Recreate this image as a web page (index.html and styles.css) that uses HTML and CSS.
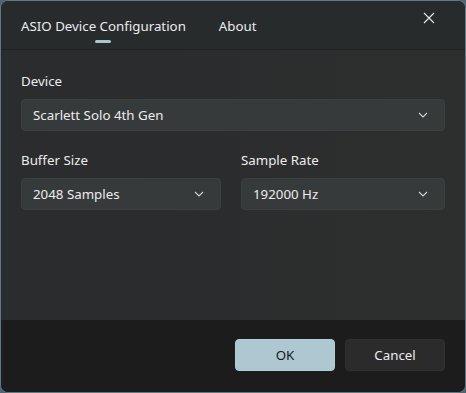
FILE: index.html
```html
<!doctype html>
<html>

<head>
    <title>ASIO Device Configuration</title>
    <link rel="stylesheet" href="styles.css">
</head>

<body>
    <div class="window">
        <div class="header">
            <div class="tabs">
                <div class="tab active">ASIO Device Configuration</div>
                <div class="tab">About</div>
            </div>
            <div class="close">
                <svg width="12" height="12" viewBox="0 0 12 12">
                    <path d="M1 1 L11 11 M11 1 L1 11" stroke="#e8e8e8" stroke-width="1.1" fill="none" />
                </svg>
            </div>
        </div>

        <div class="content">
            <div class="field">
                <label>Device</label>
                <div class="select">
                    <span>Scarlett Solo 4th Gen</span>
                    <svg class="chev" width="10" height="6" viewBox="0 0 10 6">
                        <path d="M1 1 L5 5 L9 1" stroke="#cfcfcf" stroke-width="1.1" fill="none" />
                    </svg>
                </div>
            </div>
            <div class="row">
                <div class="field">
                    <label>Buffer Size</label>
                    <div class="select">
                        <span>2048 Samples</span>
                        <svg class="chev" width="10" height="6" viewBox="0 0 10 6">
                            <path d="M1 1 L5 5 L9 1" stroke="#cfcfcf" stroke-width="1.1" fill="none" />
                        </svg>
                    </div>
                </div>
                <div class="field">
                    <label>Sample Rate</label>
                    <div class="select">
                        <span>192000 Hz</span>
                        <svg class="chev" width="10" height="6" viewBox="0 0 10 6">
                            <path d="M1 1 L5 5 L9 1" stroke="#cfcfcf" stroke-width="1.1" fill="none" />
                        </svg>
                    </div>
                </div>
            </div>
        </div>

        <div class="footer">
            <button class="btn ok">OK</button>
            <button class="btn cancel">Cancel</button>
        </div>
    </div>
</body>

</html>
```

FILE: styles.css
```css
html,
body {
    margin: 0;
    height: 100%;
    background: #4f6675;
}

body {
    font-family: "Noto Sans", "Open Sans", sans-serif;
    font-size: 13.3px;
    color: #ececec;
}

.window {
    box-sizing: border-box;
    height: 393px;
    border: 1px solid #5e7888;
    border-radius: 8px;
    overflow: hidden;
    display: flex;
    flex-direction: column;
    background: #2c2d2d;
}

.header {
    height: 48px;
    background: #272b2c;
    border-bottom: 1px solid #1f2224;
    display: flex;
    justify-content: space-between;
    padding: 0 0 0 20px;
}

.tabs {
    display: flex;
    gap: 33px;
}

.tab {
    position: relative;
    padding-top: 16px;
    font-size: 13.3px;
}

.tab.active::after {
    content: "";
    position: absolute;
    left: 50%;
    margin-left: -8px;
    top: 39px;
    width: 16px;
    height: 3px;
    border-radius: 2px;
    background: #a9c6cf;
}

.close {
    width: 48px;
    padding-top: 9px;
    padding-left: 6px;
    box-sizing: border-box;
}

.content {
    flex: 1;
    padding: 22px 20px 0 20px;
    background: linear-gradient(90deg, #2a2c2d, #2d2e2e);
}

.field {
    margin-bottom: 20px;
}

.field label {
    display: block;
    margin-bottom: 9px;
    font-size: 13.3px;
}

.select {
    height: 32px;
    box-sizing: border-box;
    background: #373a3b;
    border: 1px solid #3c3f40;
    border-radius: 4px;
    display: flex;
    align-items: center;
    justify-content: space-between;
    padding: 0 16px 0 11px;
}

.row {
    display: grid;
    grid-template-columns: 200px 1fr;
    gap: 20px;
}

.footer {
    height: 72px;
    background: #1c1c1c;
    display: flex;
    justify-content: flex-end;
    gap: 10px;
    padding: 19px 20px 0 0;
    box-sizing: border-box;
}

.btn {
    width: 100px;
    height: 32px;
    border-radius: 4px;
    font-family: inherit;
    font-size: 13.3px;
}

.ok {
    background: #adc8d0;
    border: 1px solid #b3cdd4;
    color: #1a1a1a;
}

.cancel {
    background: #2b2b2b;
    border: 1px solid #303030;
    color: #ececec;
}
```
